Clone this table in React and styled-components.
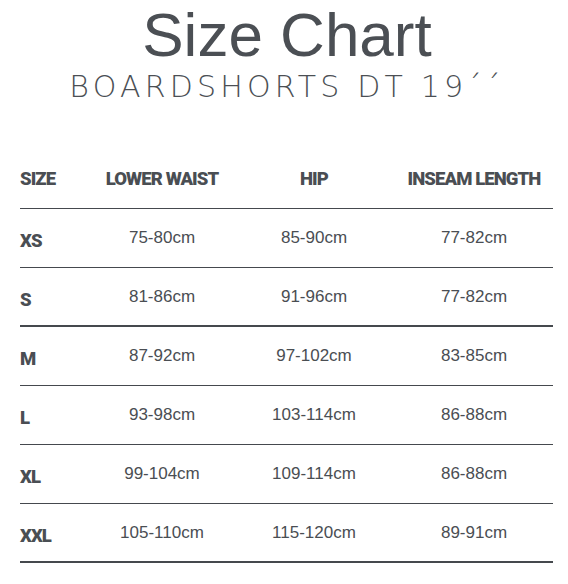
import React from "react";
import styled, { createGlobalStyle } from "styled-components";

const rows = [
  { size: "XS", waist: "75-80cm", hip: "85-90cm", inseam: "77-82cm" },
  { size: "S", waist: "81-86cm", hip: "91-96cm", inseam: "77-82cm", thick: true },
  { size: "M", waist: "87-92cm", hip: "97-102cm", inseam: "83-85cm" },
  { size: "L", waist: "93-98cm", hip: "103-114cm", inseam: "86-88cm" },
  { size: "XL", waist: "99-104cm", hip: "109-114cm", inseam: "86-88cm" },
  { size: "XXL", waist: "105-110cm", hip: "115-120cm", inseam: "89-91cm", thick: true },
];

const App = () => {
  return (
    <Page>
      <GlobalStyle />
      <Heading>
        <Title>Size Chart</Title>
        <Subtitle>BOARDSHORTS DT 19´´</Subtitle>
      </Heading>
      <Table>
        <Row>
          <HeadCell>SIZE</HeadCell>
          <HeadCell center>LOWER WAIST</HeadCell>
          <HeadCell center>HIP</HeadCell>
          <HeadCell center>INSEAM LENGTH</HeadCell>
        </Row>
        {rows.map((r) => (
          <Row key={r.size} thick={r.thick}>
            <SizeCell>{r.size}</SizeCell>
            <Cell>{r.waist}</Cell>
            <Cell>{r.hip}</Cell>
            <Cell>{r.inseam}</Cell>
          </Row>
        ))}
      </Table>
    </Page>
  );
};

export default App;

const GlobalStyle = createGlobalStyle`
  body {
    margin: 0;
    background: #ffffff;
  }
`;

const Page = styled.div`
  width: 568px;
  height: 584px;
  overflow: hidden;
  background: #ffffff;
  color: #4a4e53;
`;

const Heading = styled.div`
  display: flex;
  flex-direction: column;
  align-items: center;
  padding: 0 0 0 6px;
  height: 150px;
`;

const Title = styled.div`
  font-family: "Liberation Sans", Arial, sans-serif;
  font-size: 62px;
  line-height: 69px;
  color: #4b4f54;
`;

const Subtitle = styled.div`
  font-family: "DejaVu Sans", sans-serif;
  font-weight: 200;
  font-size: 30px;
  line-height: 35px;
  letter-spacing: 4.2px;
  color: #4b4f54;
`;

const Table = styled.div`
  margin: 0 15px 0 20px;
  display: flex;
  flex-direction: column;
`;

const Row = styled.div`
  display: grid;
  grid-template-columns: 71px 142px 162px 158px;
  align-items: center;
  height: ${(p) => (p.thick ? "57px" : "58px")};
  border-bottom: ${(p) => (p.thick ? "2px" : "1px")} solid #45494e;
`;

const HeadCell = styled.div`
  font-family: Roboto, "Liberation Sans", sans-serif;
  font-weight: 900;
  font-size: 18.5px;
  letter-spacing: -0.9px;
  color: #4a4e53;
  text-align: ${(p) => (p.center ? "center" : "left")};
`;

const SizeCell = styled(HeadCell)`
  padding-top: 6px;
`;

const Cell = styled.div`
  font-family: "Liberation Sans", Arial, sans-serif;
  font-size: 17px;
  color: #4a4e53;
  text-align: center;
`;
